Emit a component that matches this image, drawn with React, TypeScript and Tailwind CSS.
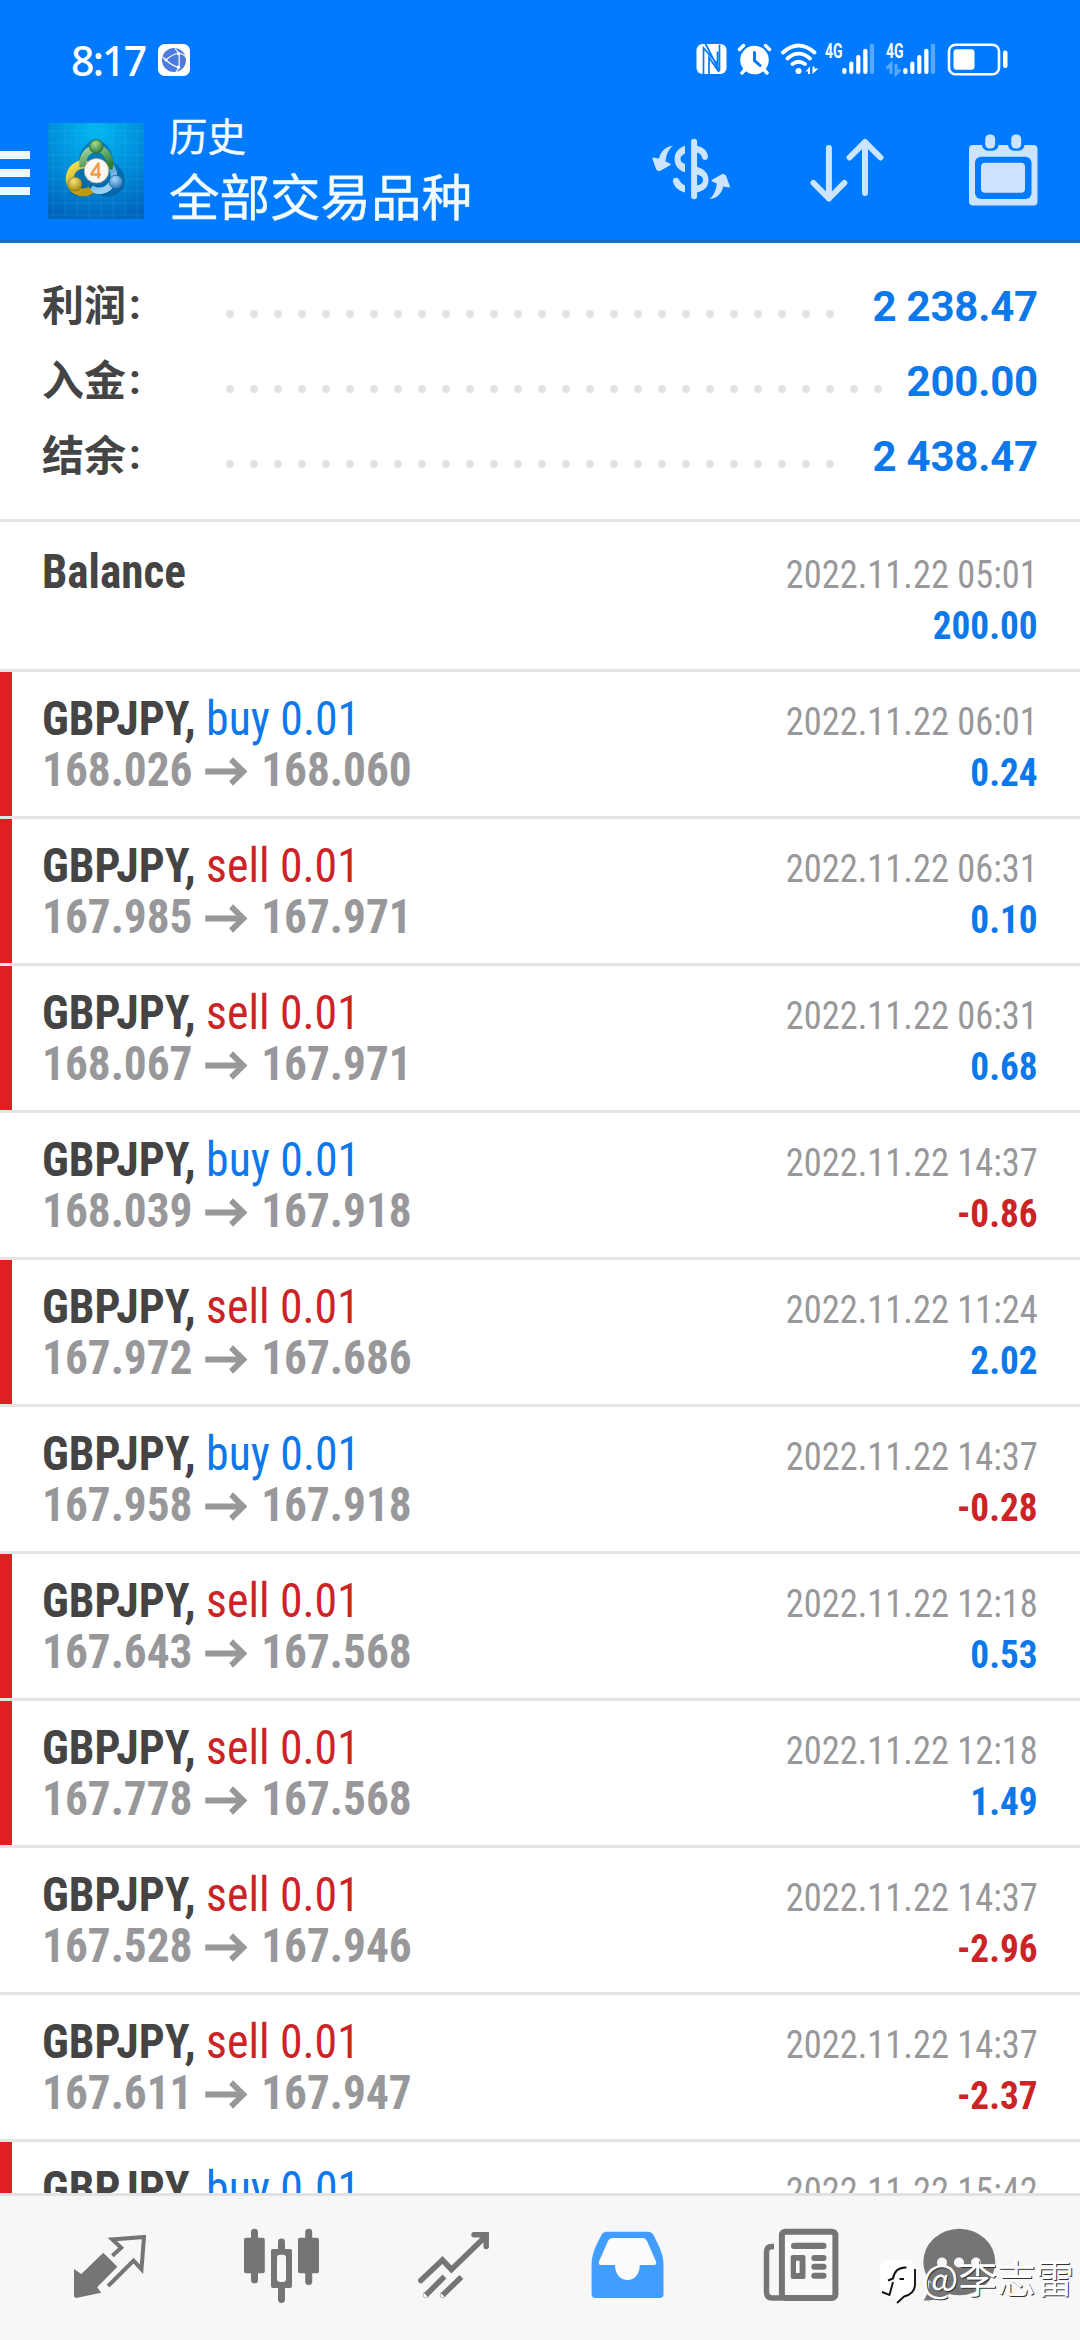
import { clsx } from 'clsx';

type Deal = {
  side: 'buy' | 'sell';
  open: string;
  close: string;
  time: string;
  profit: string;
  marked?: boolean;
};

const summary = [
  { label: '利润', value: '2 238.47', dots: 26 },
  { label: '入金', value: '200.00', dots: 28 },
  { label: '结余', value: '2 438.47', dots: 26 },
];

const deals: Deal[] = [
  { side: 'buy', open: '168.026', close: '168.060', time: '2022.11.22 06:01', profit: '0.24', marked: true },
  { side: 'sell', open: '167.985', close: '167.971', time: '2022.11.22 06:31', profit: '0.10', marked: true },
  { side: 'sell', open: '168.067', close: '167.971', time: '2022.11.22 06:31', profit: '0.68', marked: true },
  { side: 'buy', open: '168.039', close: '167.918', time: '2022.11.22 14:37', profit: '-0.86' },
  { side: 'sell', open: '167.972', close: '167.686', time: '2022.11.22 11:24', profit: '2.02', marked: true },
  { side: 'buy', open: '167.958', close: '167.918', time: '2022.11.22 14:37', profit: '-0.28' },
  { side: 'sell', open: '167.643', close: '167.568', time: '2022.11.22 12:18', profit: '0.53', marked: true },
  { side: 'sell', open: '167.778', close: '167.568', time: '2022.11.22 12:18', profit: '1.49', marked: true },
  { side: 'sell', open: '167.528', close: '167.946', time: '2022.11.22 14:37', profit: '-2.96' },
  { side: 'sell', open: '167.611', close: '167.947', time: '2022.11.22 14:37', profit: '-2.37' },
];

function Signal({ idle }: { idle?: boolean }) {
  return (
    <svg className="overflow-visible" width="50" height="33" viewBox="0 0 50 33" fill="#fff">
      <text x="0" y="14.5" fontSize="20" fontWeight="700" textLength="17.5" lengthAdjust="spacingAndGlyphs" className="font-['Roboto']">
        4G
      </text>
      {idle && (
        <path d="M5 31V21L0.5 25.5M10 21V31L14.5 26.5" fill="none" stroke="#fff" strokeWidth="3" opacity="0.35" />
      )}
      <rect x="17.2" y="25" width="4.3" height="6" rx="2" />
      <rect x="24.2" y="18.5" width="4.2" height="12.5" rx="2" />
      <rect x="31.2" y="12" width="4.2" height="19" rx="2" />
      <rect x="38.2" y="5.7" width="4.3" height="25.3" rx="2" />
      <rect x="44.8" y="0.7" width="4.3" height="30.3" rx="2" opacity="0.35" />
    </svg>
  );
}

function StatusBar() {
  return (
    <div className="flex h-[119px] items-start pt-[43px] pl-[71px] text-white">
      <span className="h-[33px] w-[87px] font-['Noto_Sans',sans-serif] text-[41px] leading-[34px] font-medium tracking-[-1.8px]">8:17</span>
      <svg width="32" height="33" viewBox="0 0 32 33">
        <rect y="1" width="32" height="32" rx="6.5" fill="#fff" />
        <circle cx="16" cy="17" r="12" fill="#4b7be0" />
        <path
          d="M8 17Q14 11 21 10.5Q27 11 28 15M8 17Q14 23 21 24.5M21 10.5Q21.5 17 21 24.5M8 17L4.5 14M21 10.5L17 5.5M21 24.5L18 29"
          stroke="#fff"
          strokeWidth="1.2"
          fill="none"
        />
        <circle cx="8" cy="17" r="1.5" fill="#fff" />
        <circle cx="20.5" cy="10.5" r="1.7" fill="#fff" />
        <circle cx="20.5" cy="24.3" r="1.7" fill="#fff" />
      </svg>

      <div className="ml-[506px] flex">
        <svg width="31" height="33" viewBox="0 0 31 33">
          <rect x="0.5" y="1" width="30" height="30" rx="6" fill="#fff" />
          <path d="M7.5 31V5L21.5 21V8.5M9.3 0.5L23.5 28V1.5M13 31V14.5L23 29" fill="none" stroke="#007aff" strokeWidth="1.7" />
        </svg>
        <svg className="ml-[10px]" width="36" height="33" viewBox="0 0 36 33" fill="none" stroke="#fff">
          <circle cx="17.5" cy="17" r="14.3" fill="#fff" stroke="none" />
          <path d="M2.5 6.5L6.5 2.5M28.5 2.5L32.5 6.5M5 30L9 25.5M30 30L26 25.5" strokeWidth="3.4" strokeLinecap="round" />
          <path d="M17.5 9.5V17.5L23 22.5" stroke="#007aff" strokeWidth="3" strokeLinecap="round" />
        </svg>
        <svg className="ml-[7px]" width="40" height="33" viewBox="0 0 40 33" fill="none" stroke="#fff" strokeLinecap="round">
          <path d="M3 9.5Q18.5 -4.5 34.5 9.5M7.5 15.5Q18.5 5.8 30 15.5M12.5 21Q18.5 16.5 25 21" strokeWidth="3.8" />
          <circle cx="18.5" cy="28" r="3" fill="#fff" stroke="none" />
          <path d="M30 23.5V31H28V28.5H25.5ZM32.5 31V23.5H34.5V25.5H38.5Z" fill="#fff" stroke="none" />
        </svg>
        <div className="ml-[5px] flex gap-[11px]">
          <Signal />
          <Signal idle />
        </div>
        <svg className="ml-[11px]" width="62" height="34" viewBox="0 0 62 34">
          <rect x="2" y="1.8" width="50" height="29.5" rx="6.5" fill="none" stroke="#fff" strokeWidth="2.6" />
          <rect x="6.5" y="6.3" width="21" height="20.5" rx="3" fill="#fff" />
          <rect x="56" y="7.5" width="4.5" height="17.5" rx="2" fill="#fff" />
        </svg>
      </div>
    </div>
  );
}

function AppLogo() {
  return (
    <svg width="96" height="96" viewBox="0 0 96 96">
      <defs>
        <radialGradient id="sky" cx="0.5" cy="0.08" r="0.95">
          <stop offset="0" stopColor="#00b8f0" />
          <stop offset="0.5" stopColor="#0090dc" />
          <stop offset="1" stopColor="#0065bd" />
        </radialGradient>
        <linearGradient id="green" x1="0" y1="0" x2="0.6" y2="1">
          <stop offset="0" stopColor="#a9d8a0" />
          <stop offset="1" stopColor="#2b8038" />
        </linearGradient>
        <linearGradient id="yellow" x1="0" y1="0" x2="0.6" y2="1">
          <stop offset="0" stopColor="#f2e352" />
          <stop offset="1" stopColor="#b99812" />
        </linearGradient>
        <linearGradient id="blue" x1="0" y1="0" x2="0.4" y2="1">
          <stop offset="0" stopColor="#2f84cc" />
          <stop offset="1" stopColor="#9bd0f2" />
        </linearGradient>
        <radialGradient id="greenHead" cx="0.4" cy="0.3" r="0.7">
          <stop offset="0" stopColor="#a8dc98" />
          <stop offset="1" stopColor="#2a7a35" />
        </radialGradient>
        <radialGradient id="yellowHead" cx="0.4" cy="0.3" r="0.7">
          <stop offset="0" stopColor="#f4e67a" />
          <stop offset="1" stopColor="#a88a14" />
        </radialGradient>
        <radialGradient id="blueHead" cx="0.4" cy="0.3" r="0.7">
          <stop offset="0" stopColor="#a5d8f8" />
          <stop offset="1" stopColor="#2b77bd" />
        </radialGradient>
      </defs>
      <rect width="96" height="96" fill="url(#sky)" />
      <path
        d="M5 0V96M17 0V96M29 0V96M41 0V96M53 0V96M65 0V96M77 0V96M89 0V96M0 8H96M0 20H96M0 32H96M0 44H96M0 56H96M0 68H96M0 80H96M0 92H96"
        stroke="#6fd0ff"
        strokeOpacity="0.13"
      />
      <path d="M48 16C58 18 65 28 65.5 39C76 46 79 56 75 65C68 76 54 75 48 70C38 76 26 75 21 68C17 56 21 45 31 39C31 28 38 18 48 16Z" fill="#06406f" opacity="0.4" />
      <path d="M59 40A14.5 15 0 1 1 43 65" fill="none" stroke="url(#blue)" strokeWidth="6.5" />
      <path d="M43 67A13.5 14 0 1 1 39 42" fill="none" stroke="url(#yellow)" strokeWidth="8" />
      <path d="M35 44A13.5 15.5 0 1 1 61 46" fill="none" stroke="url(#green)" strokeWidth="7" />
      <circle cx="48.3" cy="23.5" r="6.8" fill="url(#greenHead)" stroke="#23682d" strokeWidth="0.7" />
      <circle cx="27" cy="61" r="7" fill="url(#yellowHead)" stroke="#806a10" strokeWidth="0.7" />
      <circle cx="68" cy="59" r="6.8" fill="url(#blueHead)" stroke="#1c5c94" strokeWidth="0.7" />
      <circle cx="48.5" cy="47.7" r="12.3" fill="#fbf8f4" stroke="#b9a08c" strokeWidth="0.8" />
      <path d="M50.5 55.5V40.5L43.5 50.5V51.5H53" fill="none" stroke="#f09a4c" strokeWidth="2.4" strokeLinejoin="round" />
    </svg>
  );
}

function CurrencyIcon() {
  const arrow =
    'M21 7.7C14 8.5 8.5 13 7 20.5L1 19.5Q0 19.5 0.3 20.5L4 31Q5 33.5 8 33L18.5 27Q19.5 26.3 18 25.5L13.5 23.5C14 17 16.5 11 21 7.7Z';
  return (
    <svg width="79" height="62" viewBox="0 0 79 62" fill="#cce4ff">
      <path d={arrow} />
      <path d={arrow} transform="rotate(180 39.1 34.5)" />
      <rect x="39.1" y="0.7" width="6" height="60.6" rx="3" />
      <path d="M33 7.7C26 10 22.6 15 22.6 21S26 32.3 33 34.3V26C30 24.5 28.5 23.5 28.5 21S30 17 33 15.5Z" />
      <path d="M20.8 43C20.5 39.5 25.5 38.5 27 41.5C28 44 30 45.7 33 47.5V54.5C27 53 22 49 20.8 43Z" />
      <path d="M45 7.7C51.5 9 56 13.5 56 19C55.5 23 50.5 22.5 50 19.5C49.5 17 48 15.5 45 14.5Z" />
      <path d="M45 28.7C52 31 56.5 35 56.5 42S52 53 45 54.3V47.5C49 46.5 51 45 51 42S49 38 45 36.5Z" />
    </svg>
  );
}

function SortIcon() {
  return (
    <svg width="75" height="65" viewBox="0 0 75 65" fill="none" stroke="#cce4ff" strokeWidth="6" strokeLinecap="round" strokeLinejoin="round">
      <path d="M18.9 10V60.5M3.5 45L18.9 60.5L34.3 45" />
      <path d="M55 55V4M39.5 19.5L55 4L70.5 19.5" />
    </svg>
  );
}

function CalendarIcon() {
  return (
    <svg width="69" height="72" viewBox="0 0 69 72">
      <rect y="11" width="68.5" height="60.5" rx="4" fill="#cce4ff" />
      <rect x="6" y="22.7" width="56.5" height="42.3" rx="6" fill="#007aff" />
      <rect x="12" y="28.7" width="44" height="30" rx="4" fill="#cce4ff" />
      <rect x="13" y="-4" width="16.5" height="20.7" rx="6" fill="#007aff" />
      <rect x="39" y="-4" width="16.5" height="20.7" rx="6" fill="#007aff" />
      <rect x="16.2" y="0.5" width="10" height="14" rx="4.5" fill="#cce4ff" />
      <rect x="42.2" y="0.5" width="10" height="14" rx="4.5" fill="#cce4ff" />
    </svg>
  );
}

function Header() {
  return (
    <header className="h-[243px] shrink-0 border-b-[3px] border-[#1070cc] bg-[#007aff]">
      <StatusBar />
      <div className="flex h-[121px] items-start">
        <div className="mt-8 flex w-[30px] flex-col gap-[10px]">
          <span className="h-2 bg-[#ebf8ff]" />
          <span className="h-2 bg-[#ebf8ff]" />
          <span className="h-2 bg-[#ebf8ff]" />
        </div>
        <div className="mt-1 ml-[18px]">
          <AppLogo />
        </div>
        <div className="ml-[25px] w-[483px] font-['Noto_Sans_CJK_SC',sans-serif] text-[#f2fcff] [-webkit-text-stroke:0.4px]">
          <div className="-mt-2 text-[38.5px] leading-[46px]">历史</div>
          <div className="mt-[5px] text-[50.5px] leading-[64px]">全部交易品种</div>
        </div>
        <div className="mt-[19px]">
          <CurrencyIcon />
        </div>
        <div className="mt-[19px] ml-[79px]">
          <SortIcon />
        </div>
        <div className="mt-[15px] ml-[84px]">
          <CalendarIcon />
        </div>
      </div>
    </header>
  );
}

function Summary() {
  return (
    <section className="h-[279px] shrink-0 border-b-[3px] border-[#e4e4e4] px-[42px] pt-[25px]">
      {summary.map(({ label, value, dots }) => (
        <div key={label} className="flex h-[75px] items-center">
          <span className="-mt-[3px] flex w-[184px] text-[42px] leading-[70px] font-bold text-[#444]">
            <span className="font-['Noto_Sans_CJK_SC',sans-serif]">{label}</span>
            <span className="ml-[3px] font-['Roboto',sans-serif] leading-[73px]">:</span>
          </span>
          <span className="mt-[17px] flex gap-4">
            {Array.from({ length: dots }, (_, i) => (
              <i key={i} className="size-2 rounded-full bg-[#e2e2e2]" />
            ))}
          </span>
          <span className="mt-[2px] ml-auto font-['Roboto',sans-serif] text-[42px] leading-[73px] font-bold tracking-[-0.2px] text-[#0d78ea]">
            {value}
          </span>
        </div>
      ))}
    </section>
  );
}

function Time({ children }: { children: string }) {
  return <div className="origin-right scale-x-[0.934] text-[39px] leading-[51px] text-[#98989a]">{children}</div>;
}

function TimeAndProfit({ time, profit }: { time: string; profit: string }) {
  return (
    <div className="pt-1 text-right">
      <Time>{time}</Time>
      <div
        className={clsx(
          'origin-right scale-x-[0.955] text-[39px] leading-[51px] font-bold',
          profit.startsWith('-') ? 'text-[#cb2326]' : 'text-[#0d78ea]'
        )}
      >
        {profit}
      </div>
    </div>
  );
}

function DealTitle({ side }: { side: Deal['side'] }) {
  return (
    <div className="h-[51px] origin-left scale-x-[0.953]">
      <span className="font-bold text-[#444]">GBPJPY,</span>{' '}
      <span className={side === 'buy' ? 'text-[#0d78ea]' : 'text-[#cb2326]'}>{side} 0.01</span>
    </div>
  );
}

function DealRow({ deal }: { deal: Deal }) {
  return (
    <div className="flex h-[147px] shrink-0 border-b-[3px] border-[#e4e4e4]">
      <div className={clsx('w-3', deal.marked && 'bg-[#e02020]')} />
      <div className="flex flex-1 justify-between pt-[21px] pr-[42px] pl-[30px]">
        <div className="text-[48px] leading-[51px]">
          <DealTitle side={deal.side} />
          <div className="flex h-[51px] origin-left scale-x-[0.943] items-center font-bold text-[#98989b]">
            {deal.open}
            <svg className="mt-1 mr-[15px] ml-[13px]" width="45" height="30" viewBox="0 0 45 30" fill="none" stroke="#98989b" strokeWidth="6">
              <path d="M0 14.5H40.5M27.5 2.5L40.5 14.5L27.5 26.5" />
            </svg>
            {deal.close}
          </div>
        </div>
        <TimeAndProfit time={deal.time} profit={deal.profit} />
      </div>
    </div>
  );
}

function BottomNav() {
  return (
    <nav className="relative flex h-[147px] shrink-0 items-start border-t-[3px] border-[#e2e2e2] bg-[#f7f7f7] pl-[74px] text-[#757575]">
      <svg className="mt-[39px]" width="73" height="64" viewBox="0 0 73 64">
        <path d="M29.3 17.7L43.4 31.7L23.1 52.3L27.2 57.7L2 63L0 61.5V34L7.3 39Z" fill="currentColor" />
        <path d="M38.3 20.7L47.2 12.7L38.3 4.5L70 2L67.5 34.3L59.6 25.7L34.1 51" fill="none" stroke="currentColor" strokeWidth="4" />
      </svg>
      <svg className="mt-[32px] ml-[97px]" width="76" height="76" viewBox="0 0 76 76" fill="currentColor">
        <rect y="9.7" width="20.8" height="35.6" rx="2" />
        <rect x="7" y="0.7" width="7" height="54.6" rx="3.4" />
        <rect x="27" y="21" width="21" height="39" rx="2" />
        <rect x="34" y="10.5" width="7" height="64.5" rx="3.4" />
        <rect x="33" y="26.7" width="9" height="27.3" rx="3" fill="#f7f7f7" />
        <rect x="54" y="9.7" width="21" height="35.6" rx="2" />
        <rect x="61.2" y="0.7" width="7" height="56.3" rx="3.4" />
      </svg>
      <svg className="mt-[35px] ml-[98px]" width="72" height="68" viewBox="0 0 72 68" fill="none" stroke="currentColor" strokeWidth="5.5">
        <path d="M2.8 49.5L24.5 29L33.4 38.5L68 5" strokeLinecap="round" />
        <path d="M56 3.7H68.2V15.5" strokeLinecap="round" />
        <path d="M8 64L26.5 45.5M24.8 64L43.4 46" />
        <circle cx="8" cy="64" r="0.2" />
        <circle cx="24.8" cy="64" r="0.2" />
      </svg>
      <svg className="mt-[35px] ml-[101px]" width="74" height="68" viewBox="0 0 74 68">
        <path d="M16 0.7H57C60 0.7 61.5 2 63 5C68 15 72.5 23 72.5 34V63Q72.5 67 68.5 67H4.5Q0.6 67 0.6 63V34C0.6 23 5 14 10 5C11.5 2 13 0.7 16 0.7Z" fill="#429dff" />
        <path d="M22 7H51.5Q54.5 7 56 10L65 30.5Q66.2 34 62.5 34H48.8C48.8 43 43.5 49 36.5 49S24 43 24 34H10.5Q6.8 34 8 30.5L17 10Q18.5 7 22 7Z" fill="#fbfbfb" />
      </svg>
      <svg className="mt-[32px] ml-[98px]" width="76" height="74" viewBox="0 0 76 74" fill="currentColor">
        <path d="M11 18.5H9Q3.5 18.5 3.5 24V64Q3.5 70 9.5 70H20" fill="none" stroke="currentColor" strokeWidth="5.5" />
        <rect x="18.9" y="3.7" width="53.5" height="66.3" rx="3.5" fill="#fafafa" stroke="currentColor" strokeWidth="6" />
        <rect x="28" y="14.7" width="35.5" height="6.2" rx="3" />
        <path d="M30 27H40.5Q42.5 27 42.5 29V49Q42.5 51 40.5 51H30Q27.7 51 27.7 49V29Q27.7 27 30 27ZM33 32.7V45H36.6V32.7Z" fillRule="evenodd" />
        <rect x="48.3" y="27" width="15.2" height="6" rx="3" />
        <rect x="48.3" y="35.8" width="15.2" height="6" rx="3" />
        <rect x="48.3" y="44.7" width="15.2" height="6" rx="3" />
      </svg>
      <svg className="mt-[32px] ml-[84px]" width="73" height="74" viewBox="0 0 73 74" fill="currentColor">
        <ellipse cx="36.3" cy="34" rx="36" ry="33.3" />
        <path d="M6 54C6 62 4 68 0.5 72.5C10 73 20 70 28 65Z" />
        <circle cx="19" cy="34.5" r="5" fill="#f7f7f7" />
        <circle cx="36" cy="34.5" r="5" fill="#f7f7f7" />
        <circle cx="53" cy="34.5" r="5" fill="#f7f7f7" />
      </svg>

      {/* author stamp over the chat tab */}
      <div className="absolute top-[57px] left-[879px] flex items-start text-white">
        <svg className="mt-1" width="41" height="50" viewBox="0 0 41 50" fill="none">
          <path d="M8 3H28Q36 3 36 11V28Q36 37 25 40L18 46L16 40Q6 42 3 34Q1 30 1 20V11Q1 3 8 3Z" fill="#fff" />
          <path
            d="M36 12V27Q36 37 25 39.5L18 46M3 35L10.5 38L14 25M9 23.5L14 21.5Q16 10 27.5 10.5M20.5 22H25"
            stroke="#111"
            strokeWidth="1.9"
          />
        </svg>
        <span className="ml-[2px] font-['Noto_Sans_CJK_SC',sans-serif] text-[38.5px] leading-[46px] whitespace-nowrap [text-shadow:1px_1px_0_#333]">
          @李志雷
        </span>
      </div>
    </nav>
  );
}

export default function App() {
  return (
    <div className="flex h-[2340px] w-[1080px] flex-col overflow-hidden bg-white font-['Roboto',sans-serif]">
      <Header />
      <Summary />
      <main className="flex h-[1671px] shrink-0 flex-col overflow-hidden [font-stretch:75%]">
        <div className="flex h-[150px] shrink-0 justify-between border-b-[3px] border-[#e4e4e4] px-[42px] pt-6">
          <div className="origin-left scale-x-[0.94] text-[48px] leading-[51px] font-bold text-[#444]">Balance</div>
          <TimeAndProfit time="2022.11.22 05:01" profit="200.00" />
        </div>
        {deals.map((deal, i) => (
          <DealRow key={i} deal={deal} />
        ))}
        {/* next deal, cut by the tab bar */}
        <div className="flex h-[51px] shrink-0 overflow-hidden">
          <div className="w-3 bg-[#e02020]" />
          <div className="flex flex-1 justify-between pt-[21px] pr-[42px] pl-[30px]">
            <div className="text-[48px] leading-[51px]">
              <DealTitle side="buy" />
            </div>
            <div className="pt-1">
              <Time>2022.11.22 15:42</Time>
            </div>
          </div>
        </div>
      </main>
      <BottomNav />
    </div>
  );
}
